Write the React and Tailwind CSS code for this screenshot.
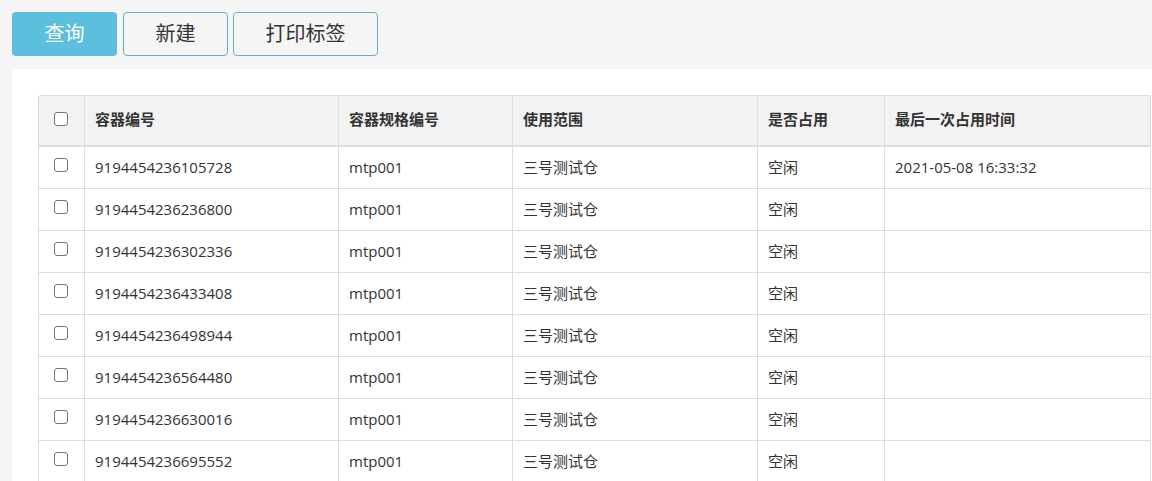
const ROWS = [
  { id: '9194454236105728', time: '2021-05-08 16:33:32' },
  { id: '9194454236236800', time: '' },
  { id: '9194454236302336', time: '' },
  { id: '9194454236433408', time: '' },
  { id: '9194454236498944', time: '' },
  { id: '9194454236564480', time: '' },
  { id: '9194454236630016', time: '' },
  { id: '9194454236695552', time: '' },
];

const HEADERS = ['容器编号', '容器规格编号', '使用范围', '是否占用', '最后一次占用时间'];

function Check() {
  return <span className="inline-block w-[14px] h-[14px] rounded-[3px] border border-[#767676] bg-white" />;
}

export default function App() {
  return (
    <div
      className="w-[1152px] h-[481px] overflow-hidden bg-[#f5f5f5] text-[#333]"
      style={{ fontFamily: '"Open Sans", "Noto Sans CJK SC", sans-serif' }}
    >
      {/* Toolbar */}
      <div className="flex pl-[12px] pt-[12px] h-[69px]">
        <button className="w-[105px] h-[44px] rounded-[4px] bg-[#5bbfdd] text-white text-[20px]">查询</button>
        <button className="ml-[6px] w-[105px] h-[44px] rounded-[4px] border border-[#6aaec4] text-[20px] text-[#333]">新建</button>
        <button className="ml-[5px] w-[145px] h-[44px] rounded-[4px] border border-[#6aaec4] text-[20px] text-[#333]">打印标签</button>
      </div>

      {/* Panel */}
      <div className="ml-[12px] bg-white pl-[26px] pt-[26px] h-[412px]">
        <table className="w-[1113px] border-separate border-spacing-0 text-[15px] table-fixed">
          <colgroup>
            <col className="w-[46px]" />
            <col className="w-[254px]" />
            <col className="w-[174px]" />
            <col className="w-[245px]" />
            <col className="w-[127px]" />
            <col />
          </colgroup>
          <thead>
            <tr className="bg-[#f2f2f2] h-[52px] text-[15px] font-bold text-[#333]">
              <th className="border-t border-l border-b-2 border-[#dddddd] rounded-tl-[4px] align-middle">
                <div className="flex justify-center pr-[2px] pb-[4px]"><Check /></div>
              </th>
              {HEADERS.map((h, i) => (
                <th
                  key={h}
                  className={`border-t border-l border-b-2 border-[#dddddd] text-left pl-[10px] pb-[2px] font-bold ${i === HEADERS.length - 1 ? 'border-r' : ''}`}
                >
                  {h}
                </th>
              ))}
            </tr>
          </thead>
          <tbody>
            {ROWS.map((r) => (
              <tr key={r.id} className="h-[42px]">
                <td className="border-l border-b border-[#dddddd]">
                  <div className="flex justify-center pr-[2px] pb-[6px]"><Check /></div>
                </td>
                <td className="border-l border-b border-[#dddddd] pl-[10px]">{r.id}</td>
                <td className="border-l border-b border-[#dddddd] pl-[10px]">mtp001</td>
                <td className="border-l border-b border-[#dddddd] pl-[10px]">三号测试仓</td>
                <td className="border-l border-b border-[#dddddd] pl-[10px]">空闲</td>
                <td className="border-l border-r border-b border-[#dddddd] pl-[10px]">{r.time}</td>
              </tr>
            ))}
          </tbody>
        </table>
      </div>
    </div>
  );
}
